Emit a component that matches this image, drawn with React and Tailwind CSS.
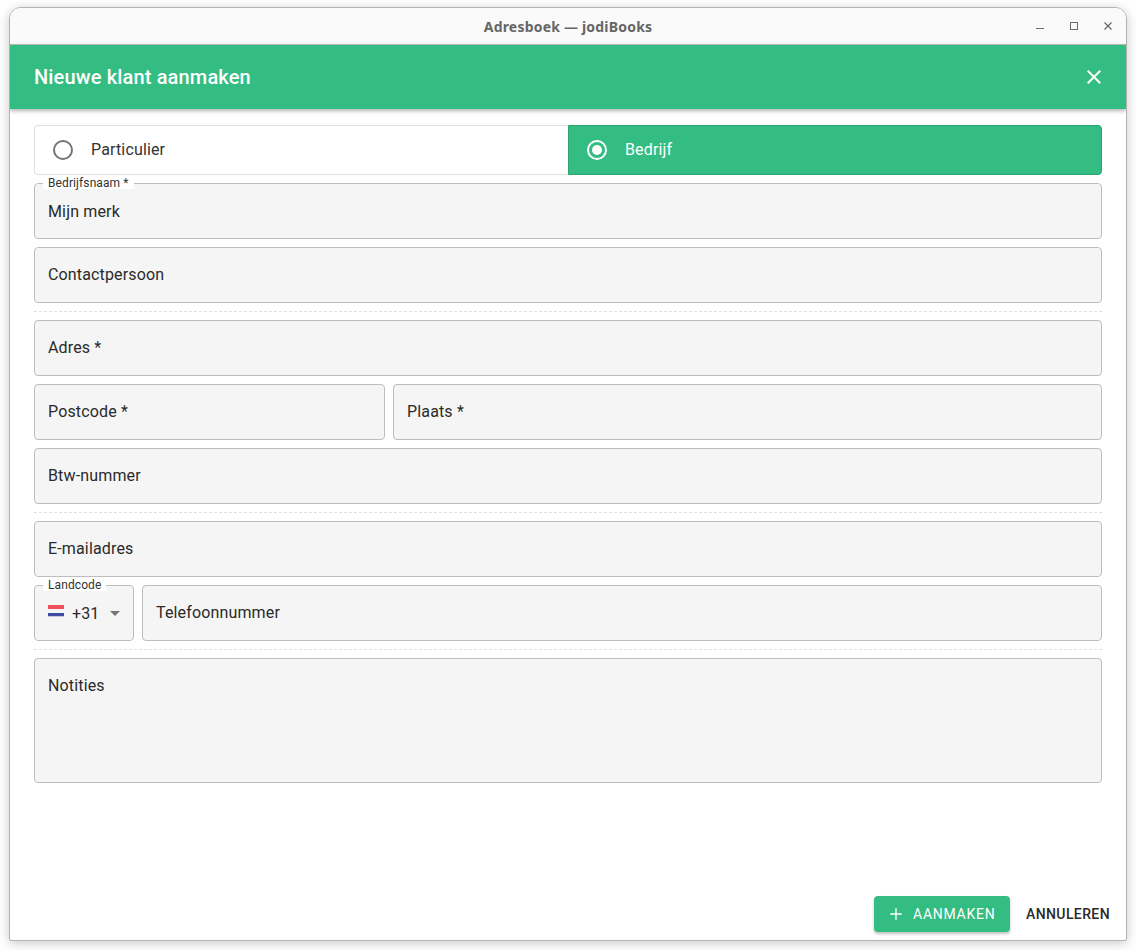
const Field = ({ label, floating, className = '', h = 'h-14', children }) => (
    <div className={`relative ${h} rounded border border-[#bdbdbd] bg-[#f5f5f5] px-[13px] ${className}`}>
        {floating && (
            <span className="absolute left-[8px] top-[-7px] bg-white px-[5px] text-xs leading-[12px] tracking-[0.1px] text-[#333]">
                {floating}
            </span>
        )}
        {children || (
            <div className={`${floating ? 'pt-[17px]' : 'pt-[16px]'} text-base leading-[22px] tracking-[0.15px] text-[#2a2a2a]`}>
                {label}
            </div>
        )}
    </div>
);

const Divider = () => <div className="border-t border-dashed border-[#e0e0e0]" />;

const Radio = ({ checked }) => (
    <span className={`flex h-5 w-5 items-center justify-center rounded-full border-2 ${checked ? 'border-white' : 'border-[#757575]'}`}>
        {checked && <span className="h-[10px] w-[10px] rounded-full bg-white" />}
    </span>
);

const App = () => {
    return (
        <div className="h-[950px] w-[1136px] bg-white pl-[9px] pt-[7px] font-['Roboto',sans-serif]">
            <div className="flex h-[934px] w-[1118px] flex-col overflow-hidden rounded-t-[12px] rounded-b-[2px] border border-[#b4b4b4] bg-white shadow-[0_2px_12px_rgba(0,0,0,0.22)]">
                <div className="relative flex h-[37px] shrink-0 items-center justify-center border-b border-[#bdbdbd] bg-[#fafafa] pt-[1px]">
                    <span className="font-['Noto_Sans',sans-serif] text-sm font-bold tracking-[0.2px] text-[#666]">
                        Adresboek — jodiBooks
                    </span>
                    <div className="absolute right-[13px] top-[13px] flex items-start gap-6">
                        <svg width="10" height="10" viewBox="0 0 10 10">
                            <path d="M1 7.5h8" stroke="#6b6b6b" strokeWidth="1" />
                        </svg>
                        <svg width="10" height="10" viewBox="0 0 10 10">
                            <rect x="1.5" y="1.5" width="7" height="7" fill="none" stroke="#6b6b6b" strokeWidth="1" />
                        </svg>
                        <svg width="10" height="10" viewBox="0 0 10 10">
                            <path d="M1.5 1.5l7 7M8.5 1.5l-7 7" stroke="#6b6b6b" strokeWidth="1.3" />
                        </svg>
                    </div>
                </div>

                <div className="z-10 flex h-16 shrink-0 items-center justify-between bg-[#33bd82] pl-6 pr-5 shadow-[0_2px_4px_rgba(0,0,0,0.3)]">
                    <h1 className="text-xl font-medium tracking-[0.15px] text-white">Nieuwe klant aanmaken</h1>
                    <svg width="24" height="24" viewBox="0 0 24 24" fill="white">
                        <path d="M19 6.41L17.59 5 12 10.59 6.41 5 5 6.41 10.59 12 5 17.59 6.41 19 12 13.41 17.59 19 19 17.59 13.41 12z" />
                    </svg>
                </div>

                <div className="flex flex-1 flex-col gap-2 px-6 pt-4">
                    <div className="flex h-[50px] tracking-[0.15px]">
                        <div className="flex w-[534px] items-center gap-[18px] rounded-l border border-r-0 border-[#e0e0e0] pl-[18px] text-base text-[#333]">
                            <Radio />
                            <span>Particulier</span>
                        </div>
                        <div className="flex flex-1 items-center gap-[18px] rounded-r border border-[#2aa56f] bg-[#33bd82] pl-[18px] text-base text-white">
                            <Radio checked />
                            <span>Bedrijf</span>
                        </div>
                    </div>

                    <Field floating="Bedrijfsnaam *" label="Mijn merk" />
                    <Field label="Contactpersoon" />
                    <Divider />
                    <Field label="Adres *" />
                    <div className="flex gap-2">
                        <Field label="Postcode *" className="w-[351px]" />
                        <Field label="Plaats *" className="flex-1" />
                    </div>
                    <Field label="Btw-nummer" />
                    <Divider />
                    <Field label="E-mailadres" />
                    <div className="flex gap-2">
                        <Field floating="Landcode" className="w-[100px]">
                            <div className="flex h-full items-center pt-[1px]">
                                <svg width="16" height="12" viewBox="0 0 16 12" className="mt-[-5px]">
                                    <rect width="16" height="4" fill="#f1515f" />
                                    <rect y="4" width="16" height="4" fill="#f5f5f5" />
                                    <rect y="8" width="16" height="3" fill="#3e4ba3" />
                                    <rect y="11" width="16" height="1" fill="#c5c8e0" />
                                </svg>
                                <span className="ml-2 text-base tracking-[0.15px] text-[#2a2a2a]">+31</span>
                                <svg width="10" height="5" viewBox="0 0 10 5" className="ml-[10px]">
                                    <path d="M0 0h10L5 5z" fill="#757575" />
                                </svg>
                            </div>
                        </Field>
                        <Field label="Telefoonnummer" className="flex-1" />
                    </div>
                    <Divider />
                    <Field label="Notities" h="h-[125px]" />
                </div>

                <div className="flex shrink-0 items-center justify-end pb-2">
                    <button className="flex h-9 w-[136px] items-center gap-[7px] rounded bg-[#33bd82] pl-3 text-sm font-normal tracking-[0.75px] text-white shadow-[0_2px_3px_rgba(0,0,0,0.25)]">
                        <svg width="20" height="20" viewBox="0 0 24 24" fill="white">
                            <path d="M19 12.8h-6.2V19h-1.6v-6.2H5v-1.6h6.2V5h1.6v6.2H19z" />
                        </svg>
                        AANMAKEN
                    </button>
                    <button className="flex h-9 w-[116px] items-center justify-center text-sm font-medium tracking-[0.4px] text-[#2a2a2a]">
                        ANNULEREN
                    </button>
                </div>
            </div>
        </div>
    );
};

export default App;
